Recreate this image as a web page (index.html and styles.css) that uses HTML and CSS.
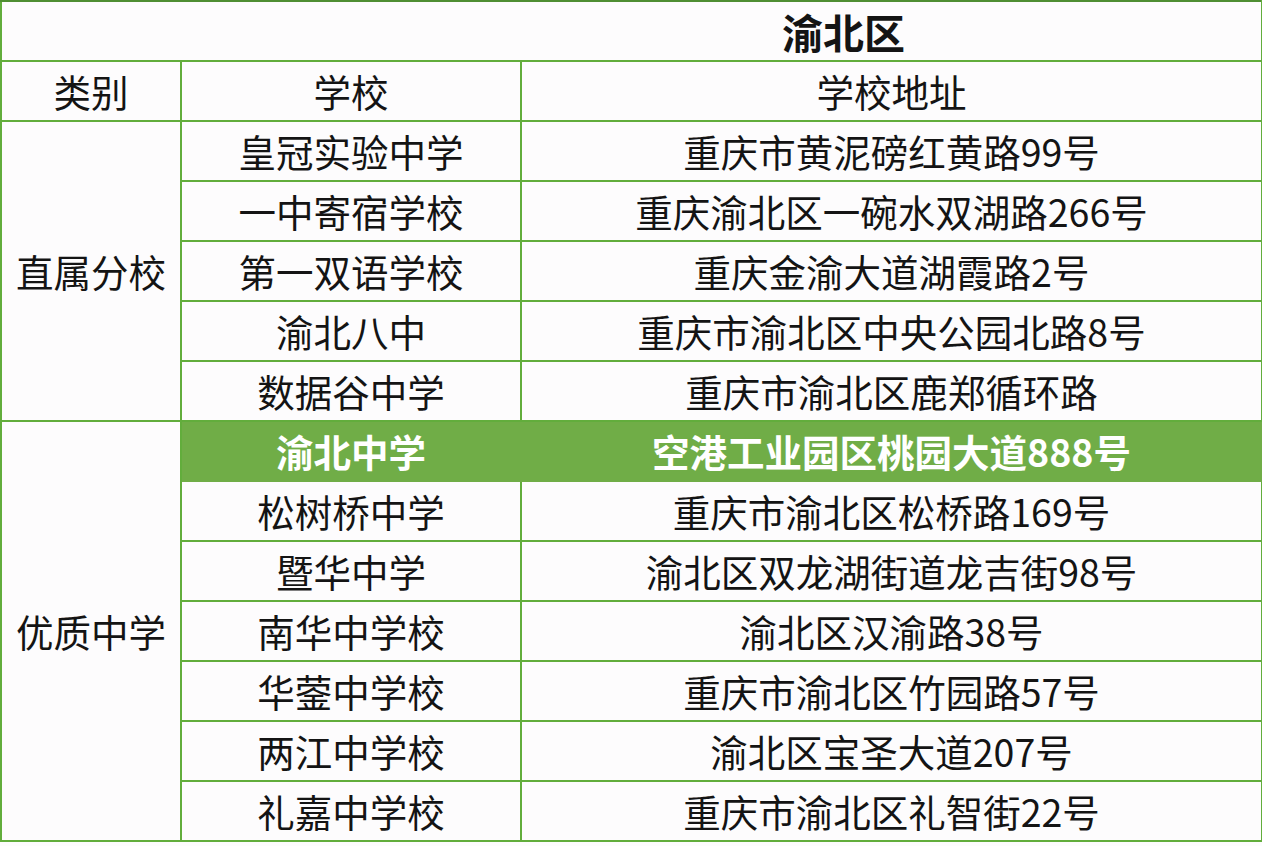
FILE: index.html
```html
<!DOCTYPE html>
<html lang="zh-CN">
<head>
<meta charset="utf-8">
<title>渝北区</title>
<link rel="stylesheet" href="styles.css">
</head>
<body>
<table class="schools">
  <colgroup>
    <col class="c-type">
    <col class="c-school">
    <col class="c-addr">
  </colgroup>
  <tr class="title-row"><td colspan="3" class="title">渝北区</td></tr>
  <tr><td>类别</td><td>学校</td><td>学校地址</td></tr>
  <tr><td rowspan="5">直属分校</td><td>皇冠实验中学</td><td>重庆市黄泥磅红黄路99号</td></tr>
  <tr><td>一中寄宿学校</td><td>重庆渝北区一碗水双湖路266号</td></tr>
  <tr><td>第一双语学校</td><td>重庆金渝大道湖霞路2号</td></tr>
  <tr><td>渝北八中</td><td>重庆市渝北区中央公园北路8号</td></tr>
  <tr><td>数据谷中学</td><td>重庆市渝北区鹿郑循环路</td></tr>
  <tr class="hl"><td rowspan="7" class="type">优质中学</td><td class="mark">渝北中学</td><td class="mark">空港工业园区桃园大道888号</td></tr>
  <tr><td>松树桥中学</td><td>重庆市渝北区松桥路169号</td></tr>
  <tr><td>暨华中学</td><td>渝北区双龙湖街道龙吉街98号</td></tr>
  <tr><td>南华中学校</td><td>渝北区汉渝路38号</td></tr>
  <tr><td>华蓥中学校</td><td>重庆市渝北区竹园路57号</td></tr>
  <tr><td>两江中学校</td><td>渝北区宝圣大道207号</td></tr>
  <tr><td>礼嘉中学校</td><td>重庆市渝北区礼智街22号</td></tr>
</table>
</body>
</html>
```
FILE: styles.css
```css
html, body {
  margin: 0;
  padding: 0;
  background: #fdfcfd;
}
body {
  font-family: "Noto Sans CJK SC", "Noto Sans", sans-serif;
  color: #141414;
}
.schools {
  border-collapse: collapse;
  table-layout: fixed;
  width: 1261px;
  margin: 0;
}
.c-type { width: 180px; }
.c-school { width: 340px; }
.c-addr { width: 741px; }
.schools td {
  border: 2px solid #62ad3c;
  height: 58px;
  padding: 0;
  text-align: center;
  vertical-align: middle;
  font-size: 37.5px;
  line-height: 58px;
  white-space: nowrap;
  overflow: hidden;
}
.schools td.title {
  text-align: left;
  padding-left: 780px;
  border-top-color: #4f8e33;
  font-size: 41px;
  font-weight: 700;
  line-height: 58px;
}
.schools td.mark {
  background: #70ad47;
  color: #ffffff;
  font-weight: 700;
  border-color: #70ad47;
}
```
